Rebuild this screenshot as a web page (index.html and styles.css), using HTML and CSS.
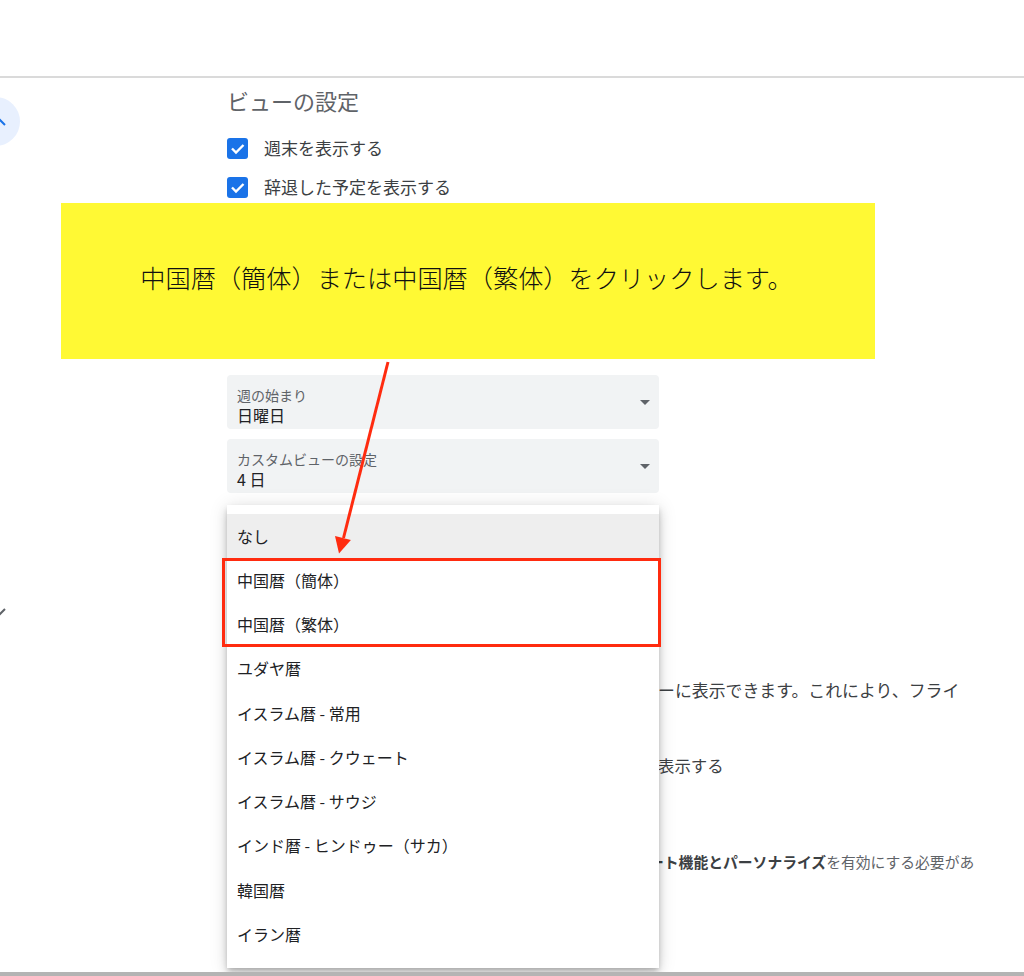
FILE: index.html
```html
<!DOCTYPE html>
<html lang="ja">
<head>
<meta charset="utf-8">
<title>ビューの設定</title>
<link rel="stylesheet" href="styles.css">
</head>
<body>
<div class="page">
  <header class="topbar"></header>
  <div class="main">
    <nav class="rail">
      <div class="rail-btn">
        <svg class="chev" width="14" height="8" viewBox="0 0 14 8"><polyline points="1,7 7,1 13,7" fill="none" stroke="#1a73e8" stroke-width="2"/></svg>
      </div>
      <svg class="rail-mark" width="14" height="9" viewBox="0 0 14 9"><polyline points="1,1 7,7 13,1" fill="none" stroke="#5f6368" stroke-width="2"/></svg>
    </nav>
    <section class="content">
      <h2 class="title">ビューの設定</h2>
      <div class="checks">
        <label class="check"><span class="box"><svg width="21" height="21" viewBox="0 0 21 21"><path d="M5 10.5 L9 14.5 L16.5 7" fill="none" stroke="#fff" stroke-width="2.4"/></svg></span><span>週末を表示する</span></label>
        <label class="check"><span class="box"><svg width="21" height="21" viewBox="0 0 21 21"><path d="M5 10.5 L9 14.5 L16.5 7" fill="none" stroke="#fff" stroke-width="2.4"/></svg></span><span>辞退した予定を表示する</span></label>
      </div>

      <div class="select first">
        <div class="select-text">
          <span class="select-label">週の始まり</span>
          <span class="select-value">日曜日</span>
        </div>
        <span class="caret"></span>
      </div>
      <div class="select">
        <div class="select-text">
          <span class="select-label">カスタムビューの設定</span>
          <span class="select-value">4 日</span>
        </div>
        <span class="caret"></span>
      </div>

      <div class="below">
        <div class="menu-anchor">
          <div class="menu" role="listbox">
            <div class="opt selected">なし</div>
            <div class="hl">
              <div class="opt">中国暦（簡体）</div>
              <div class="opt">中国暦（繁体）</div>
            </div>
            <div class="opt">ユダヤ暦</div>
            <div class="opt">イスラム暦 - 常用</div>
            <div class="opt">イスラム暦 - クウェート</div>
            <div class="opt">イスラム暦 - サウジ</div>
            <div class="opt">インド暦 - ヒンドゥー（サカ）</div>
            <div class="opt">韓国暦</div>
            <div class="opt">イラン暦</div>
          </div>
        </div>
        <div class="aside">
          <p class="desc">ーに表示できます。これにより、フライ</p>
          <p class="aside-check">表示する</p>
          <p class="note"><b>ート機能とパーソナライズ</b>を有効にする必要があ</p>
        </div>
      </div>
    </section>
  </div>
  <div class="bottombar"></div>

  <div class="callout">中国暦（簡体）または中国暦（繁体）をクリックします。</div>
  <svg class="arrow" width="80" height="205" viewBox="0 0 80 205">
    <line x1="68" y1="7" x2="23.5" y2="183" stroke="#ff2b0f" stroke-width="3"/>
    <polygon points="19,198.5 30.9,185 15,181" fill="#ff2b0f"/>
  </svg>
</div>
</body>
</html>
```
FILE: styles.css
```css
* { box-sizing: border-box; margin: 0; padding: 0; }
html, body { width: 1024px; height: 976px; overflow: hidden; background: #fff; }
body { font-family: "Noto Sans CJK JP", "Noto Sans", sans-serif; color: #3c4043; text-spacing-trim: space-all; }

.page { position: relative; height: 976px; display: flex; flex-direction: column; }
.topbar { height: 78px; flex: none; border-bottom: 2px solid #dadada; }
.main { flex: 1; min-height: 0; display: flex; overflow: hidden; }
.bottombar { height: 4px; flex: none; background: #b4b4b4; }

/* left rail */
.rail { width: 227px; flex: none; display: flex; flex-direction: column; }
.rail-btn { width: 49px; height: 49px; border-radius: 50%; background: #e8f0fe; margin: 19px 0 0 -29px; padding: 21px 0 0 21px; }
.chev { display: block; }
.rail-mark { display: block; margin: 462px 0 0 -8px; }

/* content */
.content { flex: 1; min-width: 0; padding-top: 7px; }
.title { font-size: 22px; line-height: 30px; font-weight: 400; color: #5f6368; }

.checks { margin-top: 21px; display: flex; flex-direction: column; gap: 15px; }
.check { display: flex; align-items: center; gap: 16px; height: 24px; font-size: 17px; line-height: 24px; color: #3c4043; }
.box { width: 21px; height: 21px; flex: none; border-radius: 3px; background: #1a73e8; }
.box svg { display: block; }

.select { width: 432px; height: 54px; background: #f1f3f4; border-radius: 4px; display: flex; align-items: flex-start; padding: 11px 9px 0 10px; }
.select + .select { margin-top: 10px; }
.select.first { margin-top: 176px; }
.select-text { flex: 1; display: flex; flex-direction: column; gap: 1px; }
.select-label { font-size: 14px; line-height: 18px; color: #5f6368; }
.select-value { font-size: 16px; line-height: 20px; color: #202124; }
.caret { width: 0; height: 0; margin-top: 14px; border-left: 5px solid transparent; border-right: 5px solid transparent; border-top: 5px solid #5f6368; }

/* dropdown + text peeking out to its right */
.below { display: flex; margin-top: 12px; }
.menu-anchor { position: relative; width: 431px; flex: none; }
.menu { position: absolute; top: 0; left: 0; width: 432px; z-index: 2; background: #fff; padding: 9px 0 11px;
  box-shadow: 0 3px 5px -1px rgba(0,0,0,.2), 0 6px 10px 0 rgba(0,0,0,.14), 0 1px 18px 0 rgba(0,0,0,.12); }
.opt { height: 44.25px; display: flex; align-items: center; padding: 0 0 1px 10px; font-size: 16px; line-height: 20px; color: #202124; white-space: nowrap; }
.opt.selected { background: #eeeeee; }
.hl { position: relative; }
.hl::after { content: ""; position: absolute; left: -5px; right: -2px; top: 0; bottom: 0; border: 3px solid #ff2b0f; pointer-events: none; }

.aside { flex: 1; min-width: 0; white-space: nowrap; }
.desc { margin-top: 173px; font-size: 16.9px; line-height: 24px; color: #3c4043; }
.aside-check { margin-top: 51px; font-size: 16.4px; line-height: 24px; color: #3c4043; }
.note { margin: 75px 0 0 -9px; font-size: 14.8px; line-height: 20px; color: #5f6368; }
.note b { font-weight: 700; color: #3c4043; }

/* annotation overlays */
.callout { position: absolute; left: 61px; top: 203px; width: 814px; height: 156px; z-index: 3; background: #fff934;
  display: flex; align-items: center; justify-content: center; padding: 0 3px 9px 0;
  font-size: 25.2px; line-height: 34px; font-weight: 300; color: #111; white-space: nowrap; }
.arrow { position: absolute; left: 320px; top: 355px; z-index: 4; }
```
